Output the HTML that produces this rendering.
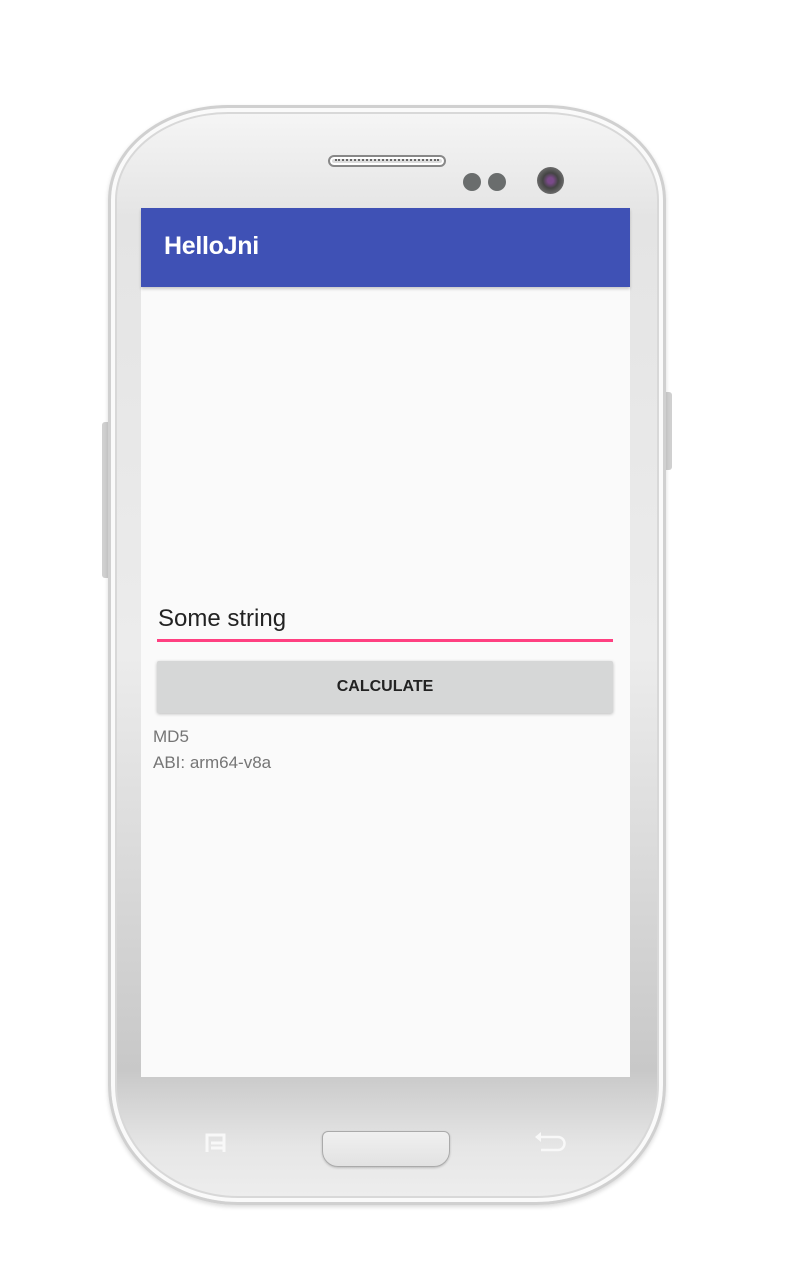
<!DOCTYPE html>
<html><head><meta charset="utf-8"><style>
*{margin:0;padding:0;box-sizing:border-box}
body{width:800px;height:1280px;background:#fff;position:relative;overflow:hidden;font-family:"Liberation Sans",sans-serif}
.abs{position:absolute}
.body{left:108px;top:105px;width:558px;height:1100px;border-radius:120px 120px 130px 130px/95px 95px 120px 120px;background:linear-gradient(#f6f6f6,#e4e4e4 10%,#ececec 50%,#c8c8c8 88%,#e6e6e6 95%,#eee);border:3px solid #d0d0d0;box-shadow:inset 0 0 0 4px #fafafa,inset 0 0 0 6px #d8d8d8,0 2px 4px rgba(0,0,0,.15)}
.screen{left:141px;top:208px;width:489px;height:869px;background:#fafafa}
.bar{left:141px;top:208px;width:489px;height:79px;background:#3f51b5;box-shadow:0 2px 3px rgba(0,0,0,.2)}
</style></head><body>
<div class="abs" style="left:102px;top:422px;width:8px;height:156px;background:#d0d0d0;border-radius:3px 0 0 3px"></div>
<div class="abs" style="left:664px;top:392px;width:8px;height:78px;background:#d0d0d0;border-radius:0 3px 3px 0"></div>
<div class="abs body"></div>
<div class="abs" style="left:328px;top:155px;width:118px;height:12px;border-radius:6px;background:#ddd;border:2px solid #888;box-shadow:inset 0 0 0 2px #fff"></div>
<div class="abs" style="left:335px;top:159px;width:104px;height:3px;border-top:2px dotted #666"></div>
<div class="abs" style="left:463px;top:173px;width:18px;height:18px;border-radius:50%;background:#6a6d6d"></div>
<div class="abs" style="left:488px;top:173px;width:18px;height:18px;border-radius:50%;background:#6a6d6d"></div>
<div class="abs" style="left:537px;top:167px;width:27px;height:27px;border-radius:50%;background:radial-gradient(#7a4a8a 15%,#444 40%,#6a6a6a 70%)"></div>
<div class="abs screen"></div>
<div class="abs bar"></div>
<div class="abs" style="left:164px;top:232px;color:#fff;font-size:25px;font-weight:bold;letter-spacing:-0.3px">HelloJni</div>
<div class="abs" style="left:158px;top:605px;color:#222;font-size:24px">Some string</div>
<div class="abs" style="left:157px;top:639px;width:456px;height:3px;background:#ff4081"></div>
<div class="abs" style="left:157px;top:661px;width:456px;height:52px;background:#d6d7d7;border-radius:2px;box-shadow:0 1px 3px rgba(0,0,0,.25);text-align:center;line-height:52px;font-size:16px;font-weight:bold;color:#222">CALCULATE</div>
<div class="abs" style="left:153px;top:724px;color:#757575;font-size:17px;line-height:26px">MD5<br>ABI: arm64-v8a</div>
<div class="abs" style="left:322px;top:1131px;width:128px;height:36px;border-radius:6px 6px 16px 16px;background:linear-gradient(#f0f0f0,#e2e2e2);border:1px solid #aaa;box-shadow:0 1px 2px rgba(0,0,0,.2)"></div>
<svg class="abs" style="left:200px;top:1128px" width="50" height="30"><path d="M7 24V7H24V24M11 15H24M11 20H24" stroke="#f8f8f8" stroke-width="3" fill="none"/></svg>
<svg class="abs" style="left:525px;top:1128px" width="50" height="30"><path d="M14 9H33A6 6 0 0 1 33 22H16" stroke="#f8f8f8" stroke-width="2.5" fill="none"/><path d="M10 9L16 4V14Z" fill="#f8f8f8"/></svg>
</body></html>
